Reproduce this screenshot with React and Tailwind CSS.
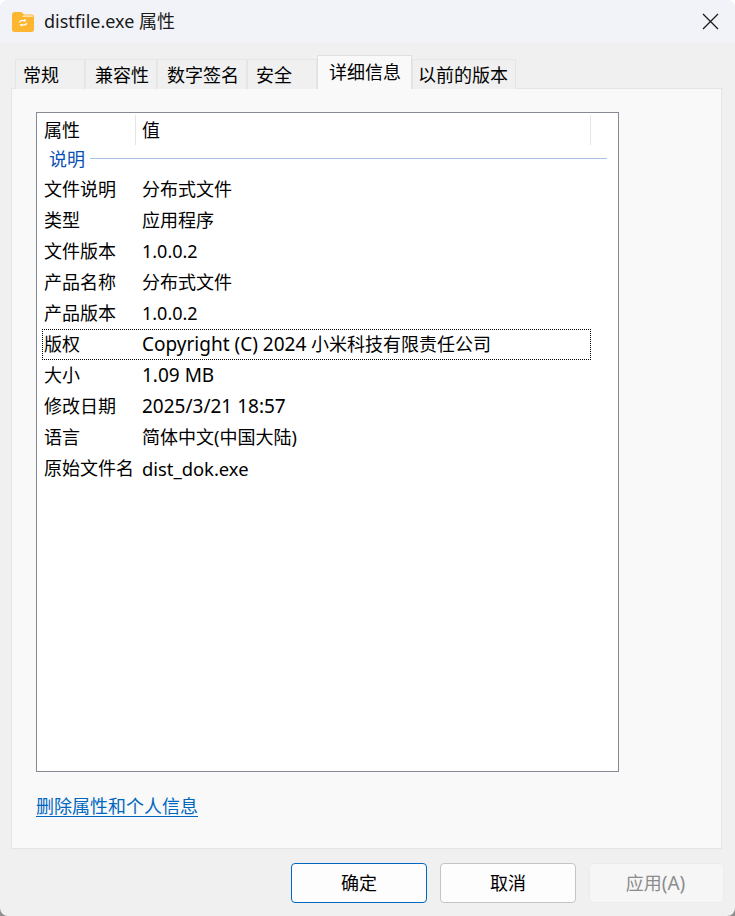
import React from 'react'

const tabs = [
  { label: '常规', cls: 'w-[70px] pl-[7px]' },
  { label: '兼容性', cls: 'w-[72px] pl-[9px]' },
  { label: '数字签名', cls: 'w-[90px] pl-[9px]' },
  { label: '安全', cls: 'w-[70px] pl-[8px]' },
]

const rows = [
  ['文件说明', '分布式文件'],
  ['类型', '应用程序'],
  ['文件版本', '1.0.0.2'],
  ['产品名称', '分布式文件'],
  ['产品版本', '1.0.0.2'],
  ['版权', <><span className="text-[19px]">Copyright (C) 2024</span> 小米科技有限责任公司</>],
  ['大小', <span className="text-[19px]">1.09 MB</span>],
  ['修改日期', <span className="text-[19px]">2025/3/21 18:57</span>],
  ['语言', '简体中文(中国大陆)'],
  ['原始文件名', <span className="text-[18.4px]">dist_dok.exe</span>],
]

function FolderIcon() {
  return (
    <svg width="22" height="20" viewBox="0 0 22 20">
      <path d="M3 0h5.500c.8 0 1.300.3 1.800.8L12 2.500h7.500A2.500 2.500 0 0 1 22 5v12.500a2.500 2.500 0 0 1-2.500 2.500h-17A2.500 2.500 0 0 1 0 17.500V3a3 3 0 0 1 3-3z" fill="#fdb62f" />
      <path d="M11.500 3.200h7.800a1.800 1.800 0 0 1 1.800 1.800H10z" fill="#ffe0a0" />
      <path d="M7.500 10c.4-1.400 3-2 5.200-1.200M14.500 11.500c-.4 1.400-3 2-5.200 1.200" fill="none" stroke="#fff" strokeWidth="1.300" strokeLinecap="round" />
      <path d="M12.400 6.800l2 2-2.600.9zM9.600 14.700l-2-2 2.600-.9z" fill="#fff" />
    </svg>
  )
}

function Row({ name, value, selected }) {
  return (
    <div
      className={
        'flex h-[31px] items-center mr-[27px] ml-[5px] border border-dotted ' +
        (selected ? 'border-black' : 'border-transparent')
      }
    >
      <span className="w-[99px] pl-[1px] shrink-0 whitespace-nowrap">{name}</span>
      <span className="whitespace-nowrap">{value}</span>
    </div>
  )
}

export default function App() {
  return (
    <div className="w-[735px] h-[916px] bg-gradient-to-b from-white to-[#8f8f8f]">
      <div
        className="w-full h-full flex flex-col overflow-hidden bg-[#f0f0f0] rounded-[8px] text-[18px] text-black"
        style={{ fontFamily: '"Noto Sans", "Noto Sans CJK SC", sans-serif' }}
      >
        {/* title bar */}
        <div className="h-[43px] shrink-0 bg-[#f2f3f8] flex items-center pl-[12px] pr-[16px]">
          <FolderIcon />
          <span className="ml-[10px] text-[18px] text-[#1a1a1a]">distfile.exe 属性</span>
          <svg className="ml-auto" width="17" height="17" viewBox="0 0 17 17">
            <path d="M1 1l15 15M16 1L1 16" stroke="#1a1a1a" strokeWidth="1.300" fill="none" />
          </svg>
        </div>

        {/* tabs */}
        <div className="h-[45px] shrink-0 flex items-end pl-[15px] relative z-10">
          {tabs.map((t) => (
            <div
              key={t.label}
              className={t.cls + ' h-[30px] mb-[-1px] pt-[2px] bg-[#f0f0f0] border border-b-0 border-[#e5e5e5] flex items-center whitespace-nowrap'}
            >
              {t.label}
            </div>
          ))}
          <div className="w-[95px] h-[34px] mb-[-1px] bg-[#f9f9f9] border border-b-0 border-[#e0e0e0] pl-[11px] flex items-center whitespace-nowrap">
            详细信息
          </div>
          <div className="w-[104px] h-[30px] mb-[-1px] pt-[2px] bg-[#f0f0f0] border border-b-0 border-[#e5e5e5] pl-[5px] flex items-center whitespace-nowrap">
            以前的版本
          </div>
        </div>

        {/* details page */}
        <div className="ml-[11px] mr-[13px] h-[761px] shrink-0 bg-[#f9f9f9] border border-[#e5e5e5] pt-[23px] pl-[24px] pr-[102px]">
          <div className="h-[660px] bg-white border border-[#868a94] pt-[2px]">
            <div className="flex h-[30px] items-center mr-[27px]">
              <span className="w-[99px] h-full pl-[7px] flex items-center border-r border-[#e5e5e5]">属性</span>
              <span className="flex-1 h-full pl-[6px] flex items-center border-r border-[#e5e5e5]">值</span>
            </div>
            <div className="h-[29px] flex items-center pl-[12px] pr-[11px]">
              <span className="text-[#0a4fb5]">说明</span>
              <div className="flex-1 ml-[5px] mb-[2px] h-px bg-[#adc1e3]"></div>
            </div>
            <div>
              {rows.map((r) => (
                <Row key={r[0]} name={r[0]} value={r[1]} selected={r[0] === '版权'} />
              ))}
            </div>
          </div>
          <a href="#" className="inline-block mt-[21px] text-[#0067c0] underline underline-offset-[3px] leading-[26px]">
            删除属性和个人信息
          </a>
        </div>

        {/* buttons */}
        <div className="flex-1 flex items-start pt-[14px] pl-[291px] gap-[13px]">
          <button className="w-[136px] h-[40px] rounded-[4px] bg-[#fdfdfd] border border-[#0067c0]">确定</button>
          <button className="w-[136px] h-[40px] rounded-[4px] bg-[#fdfdfd] border border-[#c4c4c4]">取消</button>
          <button className="w-[135px] h-[40px] pr-[2px] rounded-[4px] bg-[#f6f6f6] border border-[#ececec] text-[#8c8c8c]">
            应用<span className="text-[19px]">(A)</span>
          </button>
        </div>
      </div>
    </div>
  )
}
